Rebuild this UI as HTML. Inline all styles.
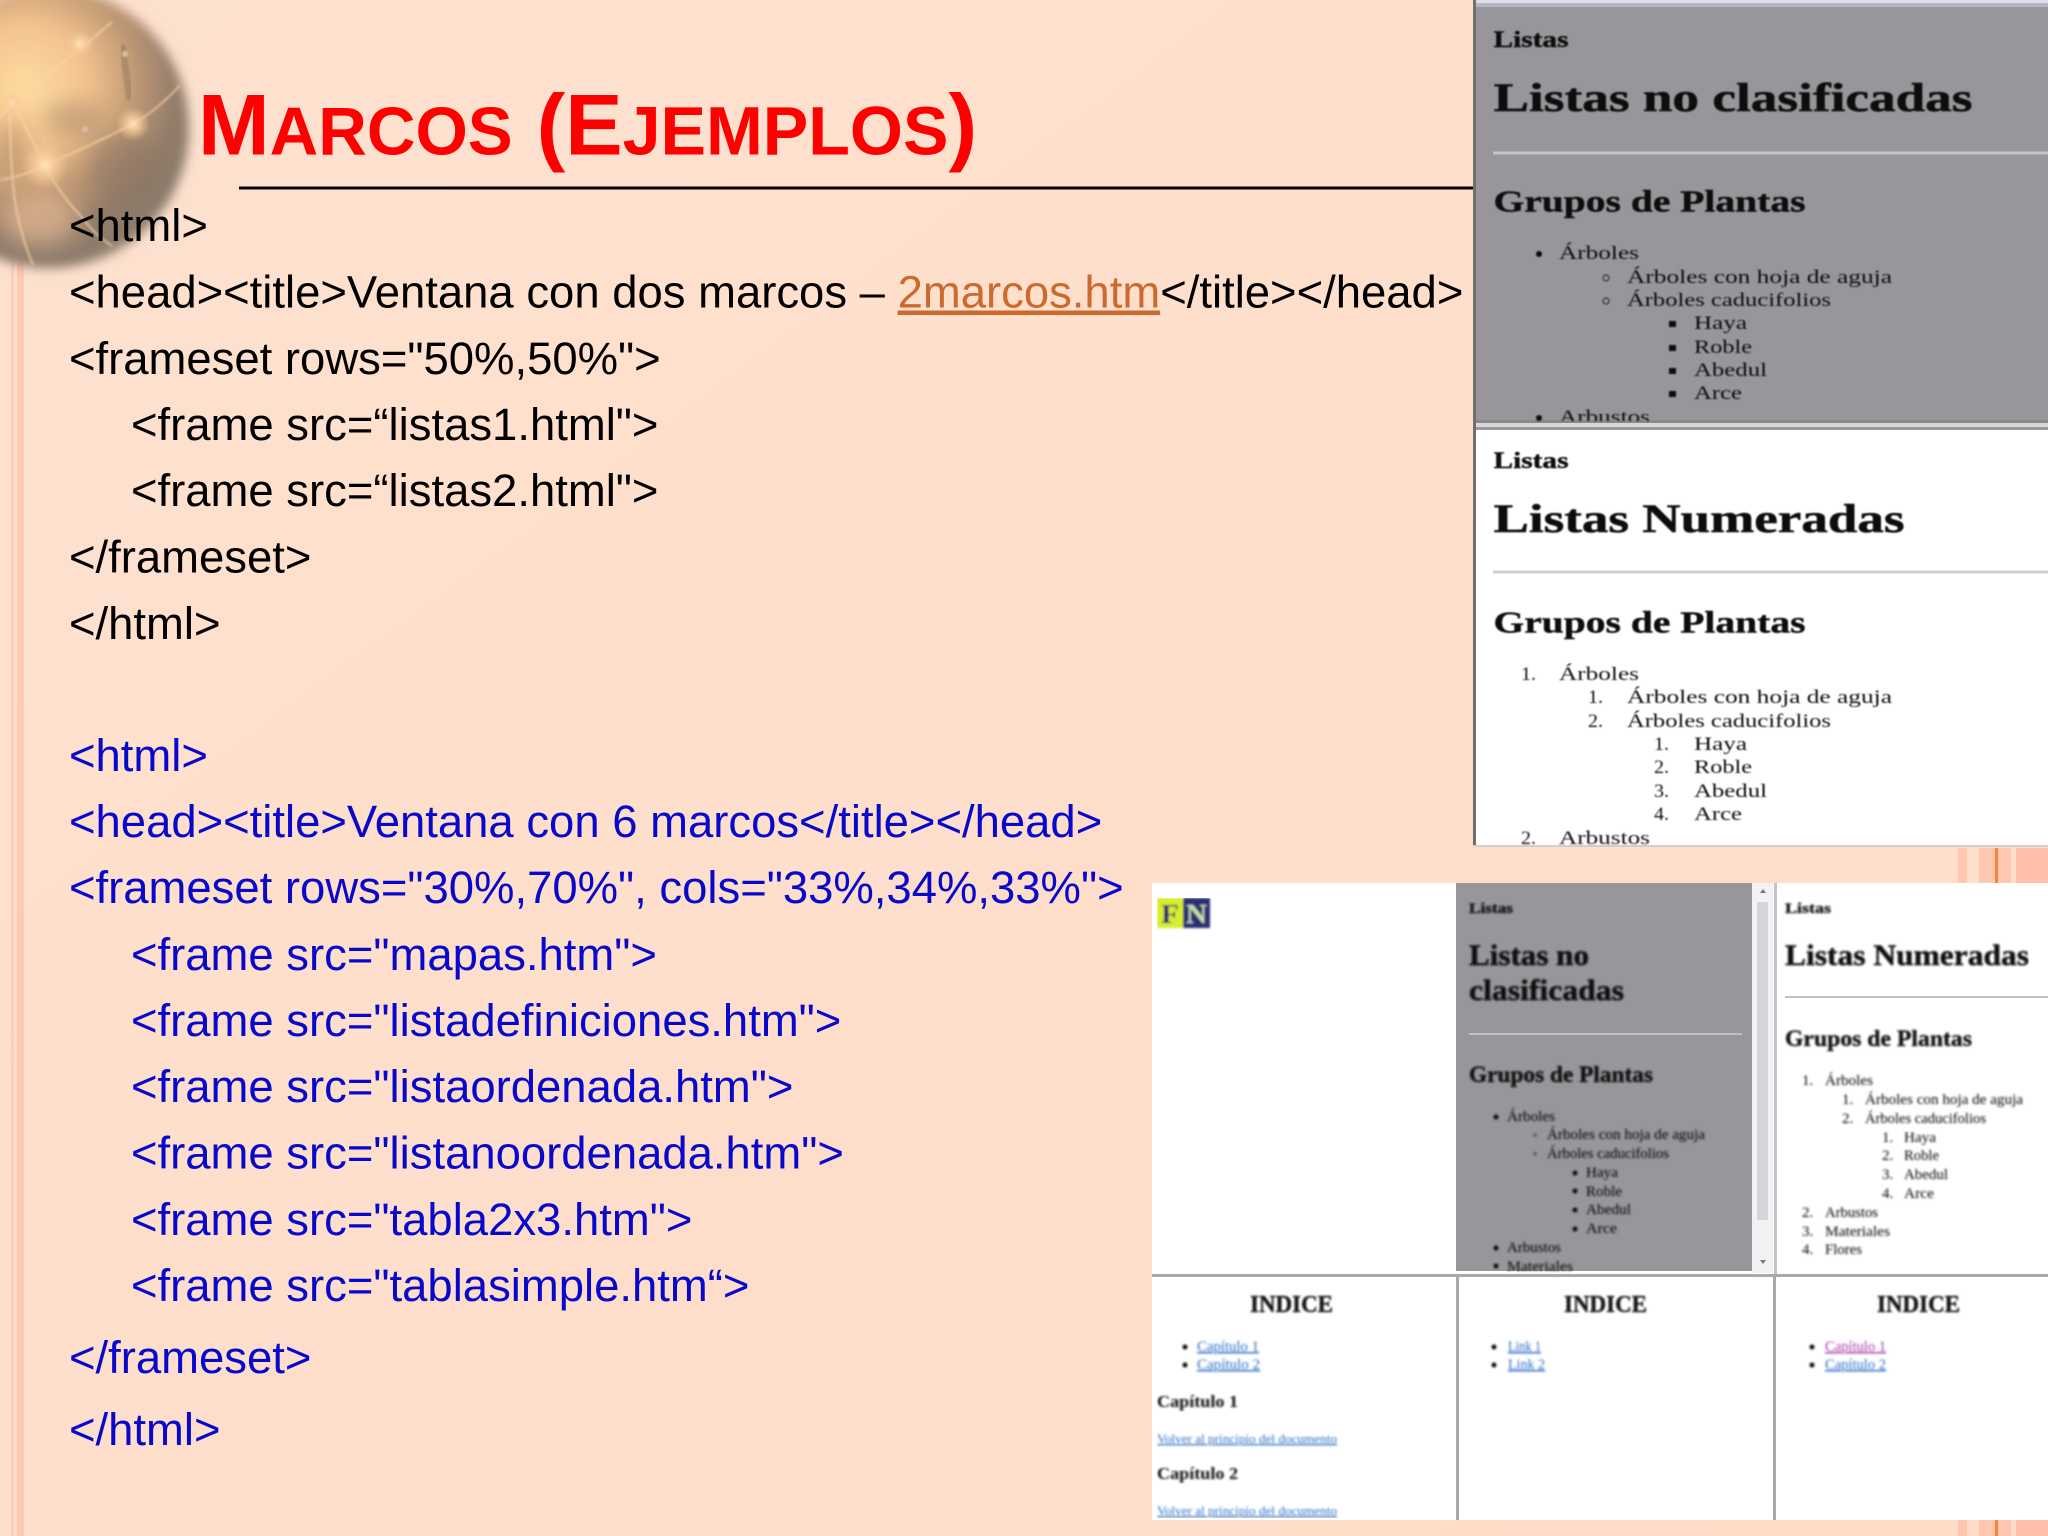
<!DOCTYPE html>
<html lang="es"><head><meta charset="utf-8"><title>Marcos (Ejemplos)</title>
<style>
html,body{margin:0;padding:0;width:2048px;height:1536px;overflow:hidden;background:#fedecb}
svg{display:block;position:absolute;left:0;top:0}
.c{font-family:"Liberation Sans",sans-serif;font-size:45.45px}
.t{font-family:"Liberation Sans",sans-serif;font-weight:700;fill:#f00}
.s{font-family:"Liberation Serif",serif;fill:#111}
.b{font-weight:700;fill:#0a0a0a}
.k{fill:#000}.u{fill:#0808cc}
.l{fill:#2a6cc4;text-decoration:underline}
</style></head><body>
<svg width="2048" height="1536" viewBox="0 0 2048 1536" xmlns="http://www.w3.org/2000/svg">
<defs>
<linearGradient id="bg" x1="0" y1="0" x2="1" y2="1"><stop offset="0" stop-color="#fde1cf"/><stop offset="1" stop-color="#ffdcc8"/></linearGradient>
<radialGradient id="g" gradientUnits="userSpaceOnUse" cx="25" cy="85" r="178"><stop offset="0" stop-color="#ffdca0"/><stop offset=".35" stop-color="#f2c28e"/><stop offset=".62" stop-color="#c09874"/><stop offset=".85" stop-color="#927c6a"/><stop offset="1" stop-color="#8c7a6c"/></radialGradient>
<radialGradient id="sp" cx=".5" cy=".5" r=".5"><stop offset="0" stop-color="#ffe6b8"/><stop offset=".4" stop-color="#fbd0a0" stop-opacity=".75"/><stop offset="1" stop-color="#f8c898" stop-opacity="0"/></radialGradient>
<filter id="f6" x="-20%" y="-20%" width="140%" height="140%"><feGaussianBlur stdDeviation="5.500"/></filter>
<filter id="f12" x="-40%" y="-40%" width="180%" height="180%"><feGaussianBlur stdDeviation="11"/></filter>
<filter id="f1" x="-10%" y="-10%" width="120%" height="120%"><feGaussianBlur stdDeviation="1.100"/></filter>
<filter id="a" x="0" y="0" width="100%" height="100%"><feGaussianBlur stdDeviation=".7"/></filter>
<filter id="e" x="0" y="0" width="100%" height="100%"><feGaussianBlur stdDeviation="1"/></filter>
<clipPath id="c1"><rect x="1476" y="7" width="572" height="414"/></clipPath>
<clipPath id="c2"><rect x="1476" y="430" width="572" height="415"/></clipPath>
<clipPath id="c3"><rect x="1456" y="883" width="296" height="388"/></clipPath>
</defs>
<rect width="2048" height="1536" fill="url(#bg)"/>
<!-- left stripes -->
<rect x="11" y="250" width="3" height="1286" fill="#ffcdb9"/>
<rect x="17" y="250" width="7" height="1286" fill="#ffc9b4"/>
<!-- right stripes -->
<g>
<rect x="1958" y="848" width="9" height="36" fill="#ffc6b0"/><rect x="1979" y="848" width="16" height="36" fill="#ffc6b0"/><rect x="1995" y="848" width="3" height="36" fill="#f4843f"/><rect x="1998" y="848" width="13" height="36" fill="#ffc6b0"/><rect x="2016" y="848" width="32" height="36" fill="#ffc0a9"/>
<rect x="1958" y="1520" width="9" height="16" fill="#ffc6b0"/><rect x="1979" y="1520" width="16" height="16" fill="#ffc6b0"/><rect x="1995" y="1520" width="3" height="16" fill="#f4843f"/><rect x="1998" y="1520" width="13" height="16" fill="#ffc6b0"/><rect x="2016" y="1520" width="32" height="16" fill="#ffc0a9"/>
</g>
<!-- globe -->
<g>
<circle cx="49" cy="128" r="140" fill="url(#g)" filter="url(#f6)"/>
<ellipse cx="125" cy="170" rx="38" ry="36" fill="#8a7464" opacity=".55" filter="url(#f12)"/>
<ellipse cx="75" cy="120" rx="30" ry="18" fill="#a98a6e" opacity=".55" filter="url(#f12)"/>
<ellipse cx="10" cy="150" rx="18" ry="28" fill="#a98468" opacity=".5" filter="url(#f12)"/>
<ellipse cx="40" cy="220" rx="38" ry="26" fill="#eec09a" opacity=".6" filter="url(#f12)"/>
<path d="M122 45 L130 100" stroke="#6f5c50" stroke-width="7" fill="none" opacity=".3" filter="url(#f1)"/>
<g fill="none" stroke="#fbd6a8" stroke-width="2" opacity=".7" filter="url(#f1)">
<path d="M0 180 Q25 176 45 165 Q90 146 133 124 Q160 108 180 85"/>
<path d="M0 118 L12 103 Q35 85 60 65 Q85 45 112 22"/>
<path d="M12 103 Q30 135 45 165 Q60 195 80 215 Q95 235 112 246"/>
<path d="M10 115 Q10 155 14 195 Q20 235 33 265"/>
</g>
<circle cx="45" cy="165" r="24" fill="url(#sp)"/><circle cx="133" cy="124" r="17" fill="url(#sp)"/><circle cx="12" cy="103" r="10" fill="url(#sp)"/><circle cx="80" cy="44" r="14" fill="url(#sp)"/>
<circle cx="125" cy="54" r="3" fill="#d8c0a8" filter="url(#f1)"/><circle cx="85" cy="129" r="3" fill="#d8c0a8" filter="url(#f1)"/>
</g>
<!-- title -->
<text class="t" y="154.500" x="198" font-size="86">M<tspan font-size="67.3">ARCOS</tspan> (E<tspan font-size="68.2">JEMPLOS</tspan>)</text>
<rect x="239" y="186.500" width="1236" height="3" fill="#0a0505"/>
<!-- code -->
<g class="c">
<g class="k">
<text x="69" y="241">&lt;html&gt;</text>
<text x="69" y="307.500">&lt;head&gt;&lt;title&gt;Ventana con dos marcos – <tspan fill="#cc6a2e" text-decoration="underline">2marcos.htm</tspan>&lt;/title&gt;&lt;/head&gt;</text>
<text x="69" y="374">&lt;frameset rows="50%,50%"&gt;</text>
<text x="131" y="440">&lt;frame src=“listas1.html"&gt;</text>
<text x="131" y="506">&lt;frame src=“listas2.html"&gt;</text>
<text x="69" y="572.500">&lt;/frameset&gt;</text>
<text x="69" y="639">&lt;/html&gt;</text>
</g>
<g class="u">
<text x="69" y="771">&lt;html&gt;</text>
<text x="69" y="837">&lt;head&gt;&lt;title&gt;Ventana con 6 marcos&lt;/title&gt;&lt;/head&gt;</text>
<text x="69" y="903">&lt;frameset rows="30%,70%", cols="33%,34%,33%"&gt;</text>
<text x="131" y="970">&lt;frame src="mapas.htm"&gt;</text>
<text x="131" y="1036">&lt;frame src="listadefiniciones.htm"&gt;</text>
<text x="131" y="1102">&lt;frame src="listaordenada.htm"&gt;</text>
<text x="131" y="1168.500">&lt;frame src="listanoordenada.htm"&gt;</text>
<text x="131" y="1235">&lt;frame src="tabla2x3.htm"&gt;</text>
<text x="131" y="1301">&lt;frame src="tablasimple.htm“&gt;</text>
<text x="69" y="1373">&lt;/frameset&gt;</text>
<text x="69" y="1445">&lt;/html&gt;</text>
</g>
</g>
<!-- screenshot 1 -->
<rect x="1473" y="0" width="575" height="847" fill="#fff"/>
<rect x="1473" y="0" width="575" height="3" fill="#dedee6"/>
<rect x="1473" y="3" width="575" height="4" fill="#b4b6c4"/>
<rect x="1476" y="7" width="572" height="414" fill="#98969a"/>
<rect x="1473" y="0" width="3" height="847" fill="#6f6f6f"/>
<rect x="1476" y="420" width="572" height="3" fill="#8a8a8a"/>
<rect x="1476" y="423" width="572" height="4" fill="#d8d8d8"/>
<rect x="1476" y="427" width="572" height="3" fill="#999"/>
<rect x="1473" y="845" width="575" height="2" fill="#d0d0d0"/>
<rect x="1493" y="151.500" width="555" height="3" fill="#c4c4c6"/>
<rect x="1493" y="570.500" width="555" height="3" fill="#cfcfcf"/>
<g filter="url(#a)">
<g clip-path="url(#c1)">
<g class="s b">
<text x="1493.500" y="47" font-size="23" textLength="75" lengthAdjust="spacingAndGlyphs" stroke="#0a0a0a" stroke-width=".4">Listas</text>
<text x="1493.500" y="111" font-size="40" textLength="479" lengthAdjust="spacingAndGlyphs" stroke="#0a0a0a" stroke-width=".5">Listas no clasificadas</text>
<text x="1493.500" y="211.500" font-size="31" textLength="312" lengthAdjust="spacingAndGlyphs" stroke="#0a0a0a" stroke-width=".4">Grupos de Plantas</text>
</g>
<g class="s" font-size="19">
<circle cx="1539" cy="254" r="3" fill="#111"/><circle cx="1606" cy="278" r="3" fill="none" stroke="#333" stroke-width="1.200"/><circle cx="1606" cy="301" r="3" fill="none" stroke="#333" stroke-width="1.200"/>
<rect x="1669" y="321" width="7" height="6" fill="#111"/><rect x="1669" y="345" width="7" height="6" fill="#111"/><rect x="1669" y="368" width="7" height="6" fill="#111"/><rect x="1669" y="391" width="7" height="6" fill="#111"/>
<circle cx="1539" cy="418" r="3" fill="#111"/>
<text x="1559" y="259" textLength="80" lengthAdjust="spacingAndGlyphs">Árboles</text>
<text x="1627" y="283" textLength="265" lengthAdjust="spacingAndGlyphs">Árboles con hoja de aguja</text>
<text x="1627" y="306" textLength="204" lengthAdjust="spacingAndGlyphs">Árboles caducifolios</text>
<text x="1694" y="329" textLength="53" lengthAdjust="spacingAndGlyphs">Haya</text>
<text x="1694" y="353" textLength="58" lengthAdjust="spacingAndGlyphs">Roble</text>
<text x="1694" y="376" textLength="73" lengthAdjust="spacingAndGlyphs">Abedul</text>
<text x="1694" y="399" textLength="48" lengthAdjust="spacingAndGlyphs">Arce</text>
<text x="1559" y="423" textLength="91" lengthAdjust="spacingAndGlyphs">Arbustos</text>
</g>
</g>
<g clip-path="url(#c2)">
<g class="s b">
<text x="1493.500" y="468" font-size="23" textLength="75" lengthAdjust="spacingAndGlyphs" stroke="#0a0a0a" stroke-width=".4">Listas</text>
<text x="1493.500" y="532" font-size="40" textLength="411" lengthAdjust="spacingAndGlyphs" stroke="#0a0a0a" stroke-width=".5">Listas Numeradas</text>
<text x="1493.500" y="632.500" font-size="31" textLength="312" lengthAdjust="spacingAndGlyphs" stroke="#0a0a0a" stroke-width=".4">Grupos de Plantas</text>
</g>
<g class="s" font-size="19">
<text x="1521" y="680" textLength="15" lengthAdjust="spacingAndGlyphs">1.</text><text x="1559" y="680" textLength="80" lengthAdjust="spacingAndGlyphs">Árboles</text>
<text x="1588" y="703" textLength="15" lengthAdjust="spacingAndGlyphs">1.</text><text x="1627" y="703" textLength="265" lengthAdjust="spacingAndGlyphs">Árboles con hoja de aguja</text>
<text x="1588" y="727" textLength="15" lengthAdjust="spacingAndGlyphs">2.</text><text x="1627" y="727" textLength="204" lengthAdjust="spacingAndGlyphs">Árboles caducifolios</text>
<text x="1654" y="750" textLength="15" lengthAdjust="spacingAndGlyphs">1.</text><text x="1694" y="750" textLength="53" lengthAdjust="spacingAndGlyphs">Haya</text>
<text x="1654" y="773" textLength="15" lengthAdjust="spacingAndGlyphs">2.</text><text x="1694" y="773" textLength="58" lengthAdjust="spacingAndGlyphs">Roble</text>
<text x="1654" y="797" textLength="15" lengthAdjust="spacingAndGlyphs">3.</text><text x="1694" y="797" textLength="73" lengthAdjust="spacingAndGlyphs">Abedul</text>
<text x="1654" y="820" textLength="15" lengthAdjust="spacingAndGlyphs">4.</text><text x="1694" y="820" textLength="48" lengthAdjust="spacingAndGlyphs">Arce</text>
<text x="1521" y="844" textLength="15" lengthAdjust="spacingAndGlyphs">2.</text><text x="1559" y="844" textLength="91" lengthAdjust="spacingAndGlyphs">Arbustos</text>
</g>
</g>
</g>
<!-- screenshot 2 -->
<rect x="1152" y="883" width="896" height="637" fill="#fff"/>
<rect x="1456" y="883" width="296" height="388" fill="#98969a"/>
<rect x="1752" y="883" width="21" height="390" fill="#f2f2f5"/>
<rect x="1757" y="902" width="11" height="318" fill="#d6d6da"/>
<rect x="1774" y="883" width="3" height="392" fill="#c4c4c4"/>
<path d="M1760 893h6l-3-4zM1760 1260h6l-3 4z" fill="#777"/>
<rect x="1152" y="1274" width="896" height="3" fill="#a9a9a9"/>
<rect x="1456" y="1275" width="3" height="245" fill="#a9a9a9"/>
<rect x="1773" y="1275" width="3" height="245" fill="#a9a9a9"/>
<rect x="1469" y="1033" width="273" height="2" fill="#c0c0c2"/>
<rect x="1785" y="996" width="263" height="2" fill="#c0c0c0"/>
<g filter="url(#e)">
<rect x="1157" y="898" width="26" height="30" fill="#d8ee2c"/><rect x="1183" y="898" width="27" height="30" fill="#2a2e78"/>
<text x="1161" y="923" font-family="Liberation Serif,serif" font-weight="700" font-size="27" fill="#1f2470" textLength="18" lengthAdjust="spacingAndGlyphs">F</text>
<text x="1186" y="923" font-family="Liberation Serif,serif" font-weight="700" font-size="27" fill="#c6e0a0" textLength="21" lengthAdjust="spacingAndGlyphs">N</text>
<g clip-path="url(#c3)">
<g class="s b">
<text x="1469" y="913" font-size="15" textLength="44" lengthAdjust="spacingAndGlyphs" stroke="#0a0a0a" stroke-width=".3">Listas</text>
<text x="1469" y="965" font-size="30" textLength="120" lengthAdjust="spacingAndGlyphs" stroke="#0a0a0a" stroke-width=".4">Listas no</text>
<text x="1469" y="1000" font-size="30" textLength="155" lengthAdjust="spacingAndGlyphs" stroke="#0a0a0a" stroke-width=".4">clasificadas</text>
<text x="1469" y="1082" font-size="23" textLength="184" lengthAdjust="spacingAndGlyphs" stroke="#0a0a0a" stroke-width=".3">Grupos de Plantas</text>
</g>
<g class="s" font-size="15">
<circle cx="1496" cy="1117" r="2.500" fill="#111"/><circle cx="1535" cy="1135" r="2" fill="#666"/><circle cx="1535" cy="1154" r="2" fill="#666"/>
<circle cx="1575" cy="1173" r="2.500" fill="#111"/><circle cx="1575" cy="1191" r="2.500" fill="#111"/><circle cx="1575" cy="1210" r="2.500" fill="#111"/><circle cx="1575" cy="1229" r="2.500" fill="#111"/><circle cx="1496" cy="1248" r="2.500" fill="#111"/><circle cx="1496" cy="1266" r="2.500" fill="#111"/>
<text x="1507" y="1121" textLength="48" lengthAdjust="spacingAndGlyphs">Árboles</text>
<text x="1547" y="1139" textLength="158" lengthAdjust="spacingAndGlyphs">Árboles con hoja de aguja</text>
<text x="1547" y="1158" textLength="122" lengthAdjust="spacingAndGlyphs">Árboles caducifolios</text>
<text x="1586" y="1177" textLength="32" lengthAdjust="spacingAndGlyphs">Haya</text>
<text x="1586" y="1196" textLength="36" lengthAdjust="spacingAndGlyphs">Roble</text>
<text x="1586" y="1214" textLength="45" lengthAdjust="spacingAndGlyphs">Abedul</text>
<text x="1586" y="1233" textLength="31" lengthAdjust="spacingAndGlyphs">Arce</text>
<text x="1507" y="1252" textLength="54" lengthAdjust="spacingAndGlyphs">Arbustos</text>
<text x="1507" y="1271" textLength="66" lengthAdjust="spacingAndGlyphs">Materiales</text>
</g>
</g>
<g class="s b">
<text x="1785" y="913" font-size="15" textLength="46" lengthAdjust="spacingAndGlyphs" stroke="#0a0a0a" stroke-width=".3">Listas</text>
<text x="1785" y="965" font-size="30" textLength="244" lengthAdjust="spacingAndGlyphs" stroke="#0a0a0a" stroke-width=".4">Listas Numeradas</text>
<text x="1785" y="1046" font-size="23" textLength="187" lengthAdjust="spacingAndGlyphs" stroke="#0a0a0a" stroke-width=".3">Grupos de Plantas</text>
</g>
<g class="s" font-size="15">
<text x="1802" y="1085">1.</text><text x="1825" y="1085" textLength="48" lengthAdjust="spacingAndGlyphs">Árboles</text>
<text x="1842" y="1104">1.</text><text x="1865" y="1104" textLength="158" lengthAdjust="spacingAndGlyphs">Árboles con hoja de aguja</text>
<text x="1842" y="1123">2.</text><text x="1865" y="1123" textLength="121" lengthAdjust="spacingAndGlyphs">Árboles caducifolios</text>
<text x="1882" y="1142">1.</text><text x="1904" y="1142" textLength="32" lengthAdjust="spacingAndGlyphs">Haya</text>
<text x="1882" y="1160">2.</text><text x="1904" y="1160" textLength="35" lengthAdjust="spacingAndGlyphs">Roble</text>
<text x="1882" y="1179">3.</text><text x="1904" y="1179" textLength="44" lengthAdjust="spacingAndGlyphs">Abedul</text>
<text x="1882" y="1198">4.</text><text x="1904" y="1198" textLength="30" lengthAdjust="spacingAndGlyphs">Arce</text>
<text x="1802" y="1217">2.</text><text x="1825" y="1217" textLength="53" lengthAdjust="spacingAndGlyphs">Arbustos</text>
<text x="1802" y="1236">3.</text><text x="1825" y="1236" textLength="65" lengthAdjust="spacingAndGlyphs">Materiales</text>
<text x="1802" y="1254">4.</text><text x="1825" y="1254" textLength="37" lengthAdjust="spacingAndGlyphs">Flores</text>
</g>
<g class="s b">
<text x="1250" y="1312" font-size="24" textLength="83" lengthAdjust="spacingAndGlyphs" stroke="#0a0a0a" stroke-width=".3">INDICE</text>
<text x="1564" y="1312" font-size="24" textLength="83" lengthAdjust="spacingAndGlyphs" stroke="#0a0a0a" stroke-width=".3">INDICE</text>
<text x="1877" y="1312" font-size="24" textLength="83" lengthAdjust="spacingAndGlyphs" stroke="#0a0a0a" stroke-width=".3">INDICE</text>
<text x="1157" y="1407" font-size="17" textLength="81" lengthAdjust="spacingAndGlyphs">Capítulo 1</text>
<text x="1157" y="1479" font-size="17" textLength="81" lengthAdjust="spacingAndGlyphs">Capítulo 2</text>
</g>
<g class="s" font-size="15">
<circle cx="1185" cy="1347" r="2.500" fill="#111"/><circle cx="1185" cy="1365" r="2.500" fill="#111"/><circle cx="1494" cy="1347" r="2.500" fill="#111"/><circle cx="1494" cy="1365" r="2.500" fill="#111"/><circle cx="1812" cy="1347" r="2.500" fill="#111"/><circle cx="1812" cy="1365" r="2.500" fill="#111"/>
<text class="l" x="1197" y="1351" textLength="62" lengthAdjust="spacingAndGlyphs">Capítulo 1</text>
<text class="l" x="1197" y="1369" textLength="63" lengthAdjust="spacingAndGlyphs">Capítulo 2</text>
<text class="l" x="1508" y="1351" textLength="33" lengthAdjust="spacingAndGlyphs">Link 1</text>
<text class="l" x="1508" y="1369" textLength="37" lengthAdjust="spacingAndGlyphs">Link 2</text>
<text class="l" style="fill:#a838a8" x="1825" y="1351" textLength="61" lengthAdjust="spacingAndGlyphs">Capítulo 1</text>
<text class="l" x="1825" y="1369" textLength="61" lengthAdjust="spacingAndGlyphs">Capítulo 2</text>
<text class="l" font-size="13" x="1157" y="1443" textLength="180" lengthAdjust="spacingAndGlyphs">Volver al principio del documento</text>
<text class="l" font-size="13" x="1157" y="1515" textLength="180" lengthAdjust="spacingAndGlyphs">Volver al principio del documento</text>
</g>
</g>
</svg>
</body></html>
